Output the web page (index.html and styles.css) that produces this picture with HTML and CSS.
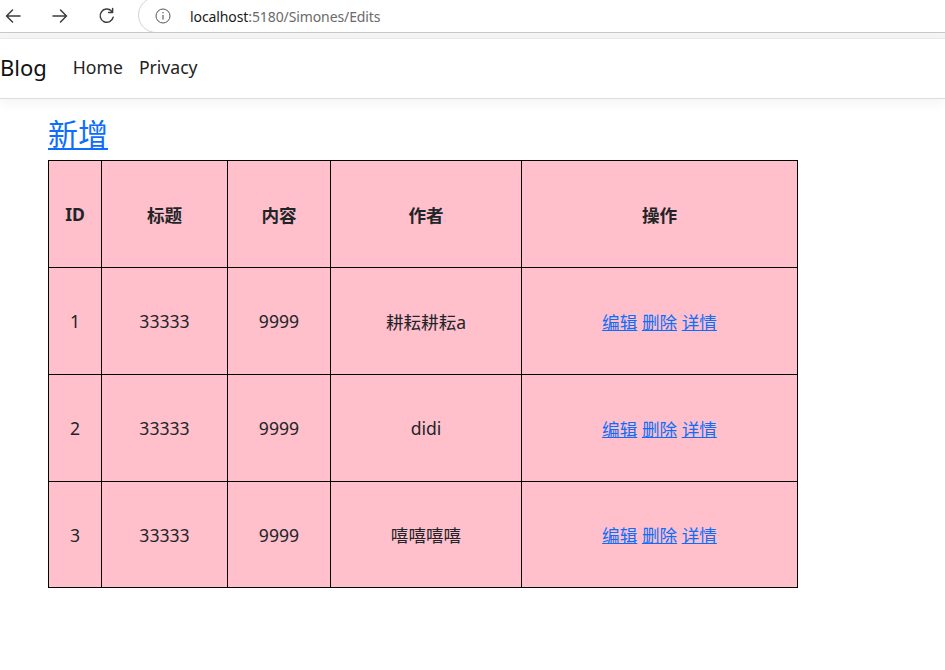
FILE: index.html
```html
<!DOCTYPE html>
<html lang="zh">
<head>
<meta charset="utf-8">
<title>Edits</title>
<link rel="stylesheet" href="styles.css">
</head>
<body>
<div class="chrome">
  <div class="navbtns">
    <svg class="nb" viewBox="0 0 20 20" width="20" height="20"><path d="M17 10H3.5M9.5 4l-6 6 6 6" fill="none" stroke="#3c3c3c" stroke-width="1.5" stroke-linecap="round" stroke-linejoin="round"/></svg>
    <svg class="nb" viewBox="0 0 20 20" width="20" height="20"><path d="M3 10h13.5M10.5 4l6 6-6 6" fill="none" stroke="#3c3c3c" stroke-width="1.5" stroke-linecap="round" stroke-linejoin="round"/></svg>
    <svg class="nb" viewBox="0 0 20 20" width="20" height="20"><path d="M16.2 11.2A6.6 6.6 0 1 1 14.6 5.2" fill="none" stroke="#3c3c3c" stroke-width="1.5" stroke-linecap="round"/><path d="M15.6 2.4v4h-4" fill="none" stroke="#3c3c3c" stroke-width="1.5" stroke-linecap="round" stroke-linejoin="round"/></svg>
  </div>
  <div class="omnibox">
    <svg class="info" viewBox="0 0 16 16" width="16" height="16"><circle cx="8" cy="8" r="7" fill="none" stroke="#555" stroke-width="1"/><path d="M8 7v4.5" stroke="#555" stroke-width="1.1"/><circle cx="8" cy="4.8" r="0.7" fill="#555"/></svg>
    <span class="url"><span class="host">localhost</span>:5180/Simones/Edits</span>
  </div>
</div>
<div class="band"></div>
<header class="navbar">
  <a class="brand">Blog</a>
  <nav class="links">
    <a class="navlink">Home</a>
    <a class="navlink">Privacy</a>
  </nav>
</header>
<main class="content">
  <a class="add" href="#">新增</a>
  <table class="grid">
    <colgroup>
      <col class="c1"><col class="c2"><col class="c3"><col class="c4"><col class="c5">
    </colgroup>
    <thead>
      <tr><th>ID</th><th>标题</th><th>内容</th><th>作者</th><th>操作</th></tr>
    </thead>
    <tbody>
      <tr><td>1</td><td>33333</td><td>9999</td><td>耕耘耕耘a</td><td><a href="#">编辑</a> <a href="#">删除</a> <a href="#">详情</a></td></tr>
      <tr><td>2</td><td>33333</td><td>9999</td><td>didi</td><td><a href="#">编辑</a> <a href="#">删除</a> <a href="#">详情</a></td></tr>
      <tr><td>3</td><td>33333</td><td>9999</td><td>嘻嘻嘻嘻</td><td><a href="#">编辑</a> <a href="#">删除</a> <a href="#">详情</a></td></tr>
    </tbody>
  </table>
</main>
</body>
</html>
```
FILE: styles.css
```css
* { box-sizing: border-box; }
html, body { margin: 0; padding: 0; background: #fff; overflow: hidden; }
body {
  font-family: "Noto Sans", "Noto Sans CJK SC", sans-serif;
  font-size: 17.6px;
  color: #212529;
  width: 945px;
  height: 670px;
}
.chrome {
  height: 33px;
  background: #fff;
  border-bottom: 1px solid #c8c8c8;
  display: flex;
  align-items: center;
  overflow: hidden;
}
.navbtns {
  flex: none;
  display: flex;
  gap: 27px;
  padding-left: 3px;
  width: 138px;
  align-items: center;
}
.nb { display: block; }
.omnibox {
  flex: none;
  width: 900px;
  height: 36px;
  margin-top: -3px;
  border: 1px solid #d3d3d3;
  border-radius: 18px;
  display: flex;
  align-items: center;
  padding-left: 16px;
  padding-top: 3px;
}
.info { display: block; margin-right: 19px; }
.url {
  font-family: "Noto Sans", sans-serif;
  font-size: 14px;
  color: #6a6a6a;
  letter-spacing: -0.1px;
}
.host { color: #1a1a1a; }
.band {
  height: 6px;
  background: #f5f5f5;
  border-bottom: 1px solid #ebebeb;
}
.navbar {
  height: 60px;
  background: #fff;
  border-bottom: 1px solid #dcdcdc;
  box-shadow: 0 4px 12px rgba(0,0,0,0.05);
  display: flex;
  align-items: center;
  padding-bottom: 3px;
  position: relative;
}
.brand {
  font-size: 22px;
  color: #111;
  margin-right: 26px;
}
.links { display: flex; gap: 16px; }
.navlink { color: #222; font-size: 17.6px; }
.content { padding: 16px 48px 0; }
.add {
  display: block;
  width: max-content;
  font-size: 30px;
  line-height: 38px;
  color: #0d6efd;
  text-decoration: underline;
  text-underline-offset: 3px;
  text-decoration-thickness: 1.5px;
}
.grid {
  border-collapse: collapse;
  background: #ffc0cb;
  width: 749px;
  margin-top: 7px;
  table-layout: fixed;
}
.c1 { width: 53px; }
.c2 { width: 126px; }
.c3 { width: 103px; }
.c4 { width: 191px; }
.c5 { width: 276px; }
.grid th, .grid td {
  border: 1px solid #000;
  text-align: center;
  vertical-align: middle;
  height: 107px;
  padding: 0;
}
.grid tbody tr:last-child td { height: 106px; }
.grid th { font-weight: 700; }
.grid a { color: #0d6efd; text-decoration: underline; }
```
